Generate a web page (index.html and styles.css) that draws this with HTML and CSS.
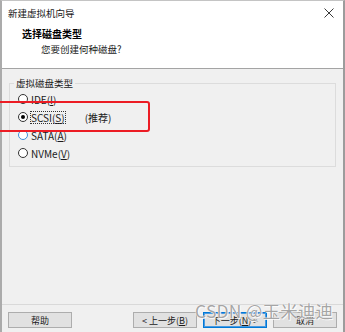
FILE: index.html
```html
<!DOCTYPE html>
<html lang="zh-CN">
<head>
<meta charset="utf-8">
<title>新建虚拟机向导</title>
<link rel="stylesheet" href="styles.css">
</head>
<body>
<div class="window">
  <div class="header">
    <div class="titlebar">
      <span class="title">新建虚拟机向导</span>
      <svg class="close" width="10" height="10" viewBox="0 0 10 10"><path d="M0.5 0.5L9.5 9.5M9.5 0.5L0.5 9.5" stroke="#3a3a3a" stroke-width="1" fill="none"/></svg>
    </div>
    <div class="heading">选择磁盘类型</div>
    <div class="sub">您要创建何种磁盘?</div>
  </div>
  <div class="content">
    <fieldset class="group">
      <legend>虚拟磁盘类型</legend>
      <div class="row"><span class="radio"></span><span class="label">IDE(<u>I</u>)</span></div>
      <div class="row"><span class="radio checked"></span><span class="label focus">SCSI(<u>S</u>)</span><span class="rec">(推荐)</span></div>
      <div class="row"><span class="radio hover"></span><span class="label">SATA(<u>A</u>)</span></div>
      <div class="row"><span class="radio"></span><span class="label">NVMe(<u>V</u>)</span></div>
    </fieldset>
  </div>
  <div class="footer">
    <button class="btn">帮助</button>
    <span class="spacer"></span>
    <button class="btn">&lt; 上一步(<u>B</u>)</button>
    <button class="btn primary">下一步(<u>N</u>) &gt;</button>
    <button class="btn">取消</button>
  </div>
</div>
<div class="mark"></div>
<div class="watermark">CSDN @玉米迪迪</div>
</body>
</html>
```
FILE: styles.css
```css
html, body {
  margin: 0;
  padding: 0;
}
body {
  width: 345px;
  height: 332px;
  position: relative;
  overflow: hidden;
  font-family: "Noto Sans CJK SC", "Noto Sans", sans-serif;
  font-size: 10px;
  color: #000;
  background: #f0f0f0;
}
.window {
  box-sizing: border-box;
  height: 332px;
  display: flex;
  flex-direction: column;
  border-top: 1px solid #c4c4c4;
  border-left: 2px solid #ababab;
  border-right: 2px solid #9c9c9c;
  background: #f0f0f0;
}
.header {
  background: #fff;
  height: 67px;
  border-bottom: 1px solid #a4a4a4;
  flex: none;
}
.titlebar {
  height: 24px;
  display: flex;
  align-items: center;
  padding: 0 8px 0 6px;
}
.title {
  flex: 1;
  font-size: 9.5px;
  line-height: 14px;
  color: #1a1a1a;
}
.close {
  display: block;
  margin-right: 1px;
}
.heading {
  margin-top: 2px;
  padding-left: 20px;
  font-weight: bold;
  font-size: 10px;
  line-height: 14px;
}
.sub {
  padding-left: 39px;
  font-size: 9.5px;
  line-height: 16px;
  color: #1a1a1a;
}
.content {
  flex: 1;
  padding: 7px 7px 0 7px;
}
.group {
  margin: 0;
  padding: 0 0 0 4px;
  height: 91px;
  box-sizing: border-box;
  border: 1px solid #dcdcdc;
}
.group legend {
  padding: 0 2px;
  font-size: 9.5px;
  line-height: 14px;
  color: #1a1a1a;
}
.row {
  height: 18px;
  display: flex;
  align-items: center;
  margin-left: 4px;
  font-size: 10px;
  line-height: 13px;
  color: #1a1a1a;
}
.row:first-of-type {
  margin-top: 0;
}
.radio {
  box-sizing: border-box;
  width: 10px;
  height: 10px;
  border: 1px solid #333;
  border-radius: 50%;
  background: #fff;
  margin-right: 2px;
  position: relative;
  flex: none;
}
.radio.checked::after {
  content: "";
  position: absolute;
  left: 2px;
  top: 2px;
  width: 4px;
  height: 4px;
  border-radius: 50%;
  background: #000;
}
.radio.hover {
  border-color: #3d8fd9;
}
.label {
  padding: 0 1px;
}
.focus {
  outline: 1px dotted #333;
  outline-offset: -1px;
}
.rec {
  margin-left: 19px;
}
.footer {
  flex: none;
  height: 28px;
  box-sizing: border-box;
  border-top: 1px solid #d9d9d9;
  display: flex;
  align-items: flex-start;
  padding: 7px 6px 0 6px;
  gap: 6px;
}
.spacer {
  flex: 1;
}
.btn {
  box-sizing: border-box;
  width: 64px;
  height: 16px;
  margin: 0;
  padding: 0;
  border: 1px solid #adadad;
  background: #e1e1e1;
  font-family: "Noto Sans CJK SC", "Noto Sans", sans-serif;
  font-size: 9px;
  line-height: 13px;
  color: #1a1a1a;
}
.btn.primary {
  border: 1px solid #0078d7;
  box-shadow: inset 0 0 0 1px #4a9be0;
}
.mark {
  position: absolute;
  left: -4px;
  top: 101px;
  width: 154px;
  height: 31px;
  box-sizing: border-box;
  border: 2px solid #ec1c24;
  border-radius: 3px;
}
.watermark {
  position: absolute;
  left: 195px;
  top: 300px;
  font-family: "Noto Sans CJK SC", "Noto Sans", sans-serif;
  font-size: 17.5px;
  line-height: 22px;
  letter-spacing: 0.2px;
  color: rgba(135, 135, 135, 0.75);
  text-shadow: 0 0 1px #fff, 0 0 1px #fff, 1px 1px 0 rgba(255,255,255,0.8);
  white-space: nowrap;
}
```
